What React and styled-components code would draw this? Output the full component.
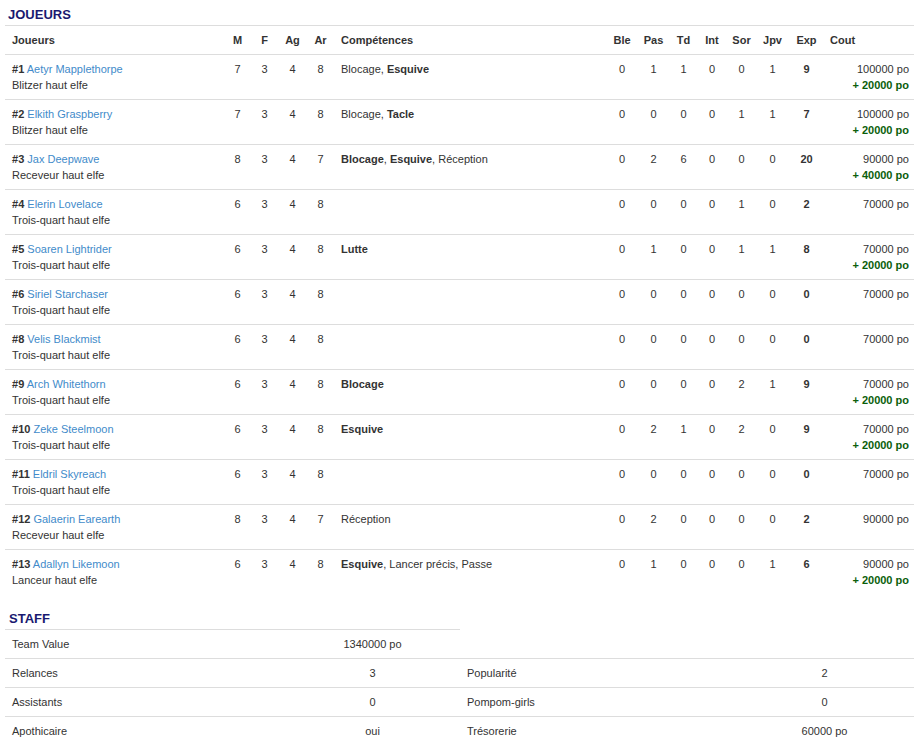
import React from "react";
import styled, { createGlobalStyle } from "styled-components";

const Global = createGlobalStyle`
  html, body { margin: 0; padding: 0; background: #fff; }
  body {
    font-family: "Liberation Sans", Arial, sans-serif;
    font-size: 11px;
    line-height: 16px;
    color: #333;
  }
`;

const Page = styled.div`
  padding: 0 7px 0 5px;
`;

const Title = styled.h2`
  margin: ${(p) => (p.$gap ? "10px" : "0")} 0 0 0;
  padding: 7px 0 3px ${(p) => (p.$indent || 3)}px;
  font-size: 13px;
  line-height: 15px;
  font-weight: bold;
  color: #191970;
`;

const Table = styled.table`
  width: 100%;
  border-collapse: collapse;
  table-layout: fixed;
`;

const Th = styled.th`
  border-top: 1px solid #ddd;
  padding: 6px ${(p) => (p.$center ? "0" : "5px")} 6px ${(p) => (p.$center ? "0" : p.$pl || "5px")};
  text-align: ${(p) => (p.$center ? "center" : "left")};
  font-weight: bold;
  vertical-align: top;
  white-space: nowrap;
`;

const Td = styled.td`
  border-top: 1px solid #ddd;
  padding: 6px ${(p) => (p.$center ? "0" : "5px")} 6px ${(p) => (p.$center ? "0" : p.$pl || "5px")};
  text-align: ${(p) => p.$align || "left"};
  font-weight: ${(p) => (p.$bold ? "bold" : "normal")};
  vertical-align: top;
  white-space: nowrap;
`;

const Num = styled.b`
  font-weight: bold;
`;

const Name = styled.a`
  color: #428bca;
  text-decoration: none;
`;

const Line = styled.div``;

const Bonus = styled.div`
  color: #0b5e0b;
  font-weight: bold;
`;

const Skill = styled.span`
  font-weight: ${(p) => (p.$bold ? "bold" : "normal")};
`;

const players = [
  { n: 1, name: "Aetyr Mapplethorpe", pos: "Blitzer haut elfe", c: [7, 3, 4, 8], sk: [["Blocage", 0], ["Esquive", 1]], s: [0, 1, 1, 0, 0, 1, 9], cost: "100000 po", bonus: "+ 20000 po" },
  { n: 2, name: "Elkith Graspberry", pos: "Blitzer haut elfe", c: [7, 3, 4, 8], sk: [["Blocage", 0], ["Tacle", 1]], s: [0, 0, 0, 0, 1, 1, 7], cost: "100000 po", bonus: "+ 20000 po" },
  { n: 3, name: "Jax Deepwave", pos: "Receveur haut elfe", c: [8, 3, 4, 7], sk: [["Blocage", 1], ["Esquive", 1], ["Réception", 0]], s: [0, 2, 6, 0, 0, 0, 20], cost: "90000 po", bonus: "+ 40000 po" },
  { n: 4, name: "Elerin Lovelace", pos: "Trois-quart haut elfe", c: [6, 3, 4, 8], sk: [], s: [0, 0, 0, 0, 1, 0, 2], cost: "70000 po" },
  { n: 5, name: "Soaren Lightrider", pos: "Trois-quart haut elfe", c: [6, 3, 4, 8], sk: [["Lutte", 1]], s: [0, 1, 0, 0, 1, 1, 8], cost: "70000 po", bonus: "+ 20000 po" },
  { n: 6, name: "Siriel Starchaser", pos: "Trois-quart haut elfe", c: [6, 3, 4, 8], sk: [], s: [0, 0, 0, 0, 0, 0, 0], cost: "70000 po" },
  { n: 8, name: "Velis Blackmist", pos: "Trois-quart haut elfe", c: [6, 3, 4, 8], sk: [], s: [0, 0, 0, 0, 0, 0, 0], cost: "70000 po" },
  { n: 9, name: "Arch Whitethorn", pos: "Trois-quart haut elfe", c: [6, 3, 4, 8], sk: [["Blocage", 1]], s: [0, 0, 0, 0, 2, 1, 9], cost: "70000 po", bonus: "+ 20000 po" },
  { n: 10, name: "Zeke Steelmoon", pos: "Trois-quart haut elfe", c: [6, 3, 4, 8], sk: [["Esquive", 1]], s: [0, 2, 1, 0, 2, 0, 9], cost: "70000 po", bonus: "+ 20000 po" },
  { n: 11, name: "Eldril Skyreach", pos: "Trois-quart haut elfe", c: [6, 3, 4, 8], sk: [], s: [0, 0, 0, 0, 0, 0, 0], cost: "70000 po" },
  { n: 12, name: "Galaerin Earearth", pos: "Receveur haut elfe", c: [8, 3, 4, 7], sk: [["Réception", 0]], s: [0, 2, 0, 0, 0, 0, 2], cost: "90000 po" },
  { n: 13, name: "Adallyn Likemoon", pos: "Lanceur haut elfe", c: [6, 3, 4, 8], sk: [["Esquive", 1], ["Lancer précis", 0], ["Passe", 0]], s: [0, 1, 0, 0, 0, 1, 6], cost: "90000 po", bonus: "+ 20000 po" },
];

const widths = [219, 27, 27, 29, 27, 272, 32, 31, 29, 28, 31, 31, 37, 89];
const charHeads = ["M", "F", "Ag", "Ar"];
const statHeads = ["Ble", "Pas", "Td", "Int", "Sor", "Jpv", "Exp"];

function PlayerRow({ p }) {
  return (
    <tr>
      <Td $pl="7px">
        <Line>
          <Num>#{p.n}</Num> <Name href="#">{p.name}</Name>
        </Line>
        <Line>{p.pos}</Line>
      </Td>
      {p.c.map((v, i) => (
        <Td key={i} $center $align="center">{v}</Td>
      ))}
      <Td $pl="7px">
        {p.sk.map(([s, b], i) => (
          <React.Fragment key={s}>
            {i > 0 && ", "}
            <Skill $bold={!!b}>{s}</Skill>
          </React.Fragment>
        ))}
      </Td>
      {p.s.map((v, i) => (
        <Td key={i} $center $align="center" $bold={i === 6}>{v}</Td>
      ))}
      <Td $align="right">
        <Line>{p.cost}</Line>
        {p.bonus && <Bonus>{p.bonus}</Bonus>}
      </Td>
    </tr>
  );
}

const staffWidths = [280, 175, 275, 179];

const staffRows = [
  [["Relances", "3"], ["Popularité", "2"]],
  [["Assistants", "0"], ["Pompom-girls", "0"]],
  [["Apothicaire", "oui"], ["Trésorerie", "60000 po"]],
];

export default function App() {
  return (
    <>
      <Global />
      <Page>
        <Title>JOUEURS</Title>
        <Table>
          <colgroup>
            {widths.map((w, i) => (
              <col key={i} style={{ width: w }} />
            ))}
          </colgroup>
          <thead>
            <tr>
              <Th $pl="7px">Joueurs</Th>
              {charHeads.map((h) => (
                <Th key={h} $center>{h}</Th>
              ))}
              <Th $pl="7px">Compétences</Th>
              {statHeads.map((h) => (
                <Th key={h} $center>{h}</Th>
              ))}
              <Th>Cout</Th>
            </tr>
          </thead>
          <tbody>
            {players.map((p) => (
              <PlayerRow key={p.n} p={p} />
            ))}
          </tbody>
        </Table>

        <Title $gap $indent={4}>STAFF</Title>
        <Table>
          <colgroup>
            {staffWidths.map((w, i) => (
              <col key={i} style={{ width: w }} />
            ))}
          </colgroup>
          <tbody>
            <tr>
              <Td $pl="7px">Team Value</Td>
              <Td $align="center">1340000 po</Td>
            </tr>
            {staffRows.map((r) => (
              <tr key={r[0][0]}>
                <Td $pl="7px">{r[0][0]}</Td>
                <Td $align="center">{r[0][1]}</Td>
                <Td $pl="7px">{r[1][0]}</Td>
                <Td $align="center">{r[1][1]}</Td>
              </tr>
            ))}
          </tbody>
        </Table>
      </Page>
    </>
  );
}
